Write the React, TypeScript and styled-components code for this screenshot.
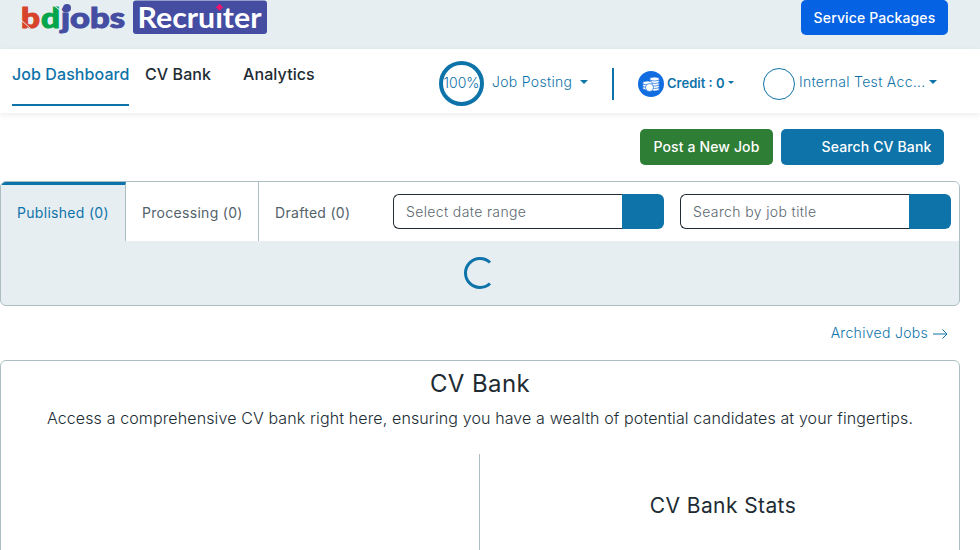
import React from "react";
import styled, { createGlobalStyle } from "styled-components";

const blue = "#0e73a9";
const line = "#adbec3";

const GlobalStyle = createGlobalStyle`
  *, *::before, *::after { box-sizing: border-box; }
  html, body { margin: 0; height: 550px; overflow: hidden; background: #fff; }
  body { font-family: Inter, sans-serif; font-size: 14px; line-height: 21px; letter-spacing: 0.3px; color: #212b33; }
  button, input { font: inherit; letter-spacing: inherit; }
  h2, h3, p { margin: 0; }
`;

const Page = styled.div`
  height: 550px;
  overflow: hidden;
`;

const TopBar = styled.header`
  display: flex;
  justify-content: space-between;
  height: 49px;
  padding: 0 32px 0 21px;
  background: #e7eef2;
`;

const Logo = styled.svg`
  display: block;
  width: 248px;
  height: 36px;
`;

const Button = styled.button<{ $bg: string; $w: number; $h?: number; $left?: boolean }>`
  flex: none;
  width: ${(p) => p.$w}px;
  height: ${(p) => p.$h ?? 36}px;
  padding: ${(p) => (p.$left ? "0 0 1px 28px" : "0 0 1px")};
  border: 0;
  border-radius: 5px;
  background: ${(p) => p.$bg};
  color: #fff;
  font-size: 14px;
  font-weight: 500;
  letter-spacing: 0.13px;
  white-space: nowrap;
`;

const Nav = styled.nav`
  position: relative;
  display: flex;
  height: 64px;
  padding-left: 12px;
  background: #fff;
  box-shadow: 0 2px 6px rgba(0, 0, 0, 0.08);
  white-space: nowrap;
`;

const NavLinks = styled.div`
  display: flex;
  width: 427px;
`;

const NavLink = styled.a<{ $active?: boolean; $ml?: number }>`
  height: 57px;
  margin-left: ${(p) => p.$ml ?? 0}px;
  width: ${(p) => (p.$active ? "117px" : "auto")};
  padding-top: 13px;
  font-size: 16px;
  line-height: 24px;
  font-weight: 500;
  letter-spacing: 0.08px;
  color: ${(p) => (p.$active ? blue : "#212b33")};
  border-bottom: 2px solid ${(p) => (p.$active ? blue : "transparent")};
`;

const Account = styled.div`
  display: flex;
  align-items: flex-start;
  padding-top: 12px;
  color: ${blue};
`;

const Progress = styled.div`
  display: flex;
  align-items: center;
  justify-content: center;
  width: 45px;
  height: 45px;
  border: 4px solid ${blue};
  border-radius: 50%;
  font-weight: 300;
  letter-spacing: 0;
  padding-bottom: 3px;
`;

const MenuText = styled.span<{ $w: number; $ml: number }>`
  width: ${(p) => p.$w}px;
  margin: 10px 0 0 ${(p) => p.$ml}px;
  font-weight: 300;
`;

const Caret = styled.i<{ $size: number; $top: number }>`
  margin-top: ${(p) => p.$top}px;
  border: ${(p) => p.$size}px solid transparent;
  border-top-color: ${blue};
  border-bottom: 0;
`;

const Divider = styled.span`
  width: 2px;
  height: 32px;
  margin: 7px 24px 0 24px;
  background: ${blue};
`;

const Coins = styled.svg`
  width: 26px;
  height: 26px;
  margin-top: 10px;
`;

const Credit = styled.b`
  width: 61px;
  margin: 12px 0 0 3px;
  font-size: 13px;
  font-weight: 600;
  letter-spacing: 0;
`;

const Avatar = styled.span`
  width: 32px;
  height: 32px;
  margin: 7px 0 0 29px;
  border: 1px solid ${blue};
  border-radius: 50%;
`;

const Content = styled.main`
  width: 960px;
`;

const Actions = styled.div`
  display: flex;
  justify-content: flex-end;
  gap: 8px;
  padding: 16px 16px 16px 0;
`;

const Panel = styled.section`
  border: 1px solid ${line};
  border-radius: 6px;
  overflow: hidden;
`;

const JobsPanel = styled(Panel)`
  height: 125px;
  background: #e7eef2;
`;

const TabBar = styled.div`
  display: flex;
  height: 59px;
  background: #fff;
`;

const Tab = styled.div<{ $active?: boolean; $w: number; $last?: boolean }>`
  flex: none;
  width: ${(p) => p.$w}px;
  padding: ${(p) => (p.$active ? 17 : 20)}px 0 0 16px;
  border-top: ${(p) => (p.$active ? `3px solid ${blue}` : "0")};
  border-right: ${(p) => (p.$last ? "0" : `1px solid ${line}`)};
  background: ${(p) => (p.$active ? "#e7eef2" : "#fff")};
  color: ${(p) => (p.$active ? blue : "#53626a")};
  font-weight: 400;
  white-space: nowrap;
`;

const Search = styled.div`
  display: flex;
  flex: none;
  width: 271px;
  height: 35px;
  margin: 12px 16px 0 0;
`;

const Field = styled.input`
  width: 229px;
  height: 35px;
  padding: 0 12px;
  border: 1px solid #212b33;
  border-right: 0;
  border-radius: 6px 0 0 6px;
  outline: 0;
  font-weight: 300;
  letter-spacing: 0.37px;
  &::placeholder { color: #5b686f; opacity: 1; }
`;

const SearchButton = styled.button`
  width: 42px;
  border: 0;
  border-radius: 0 6px 6px 0;
  background: ${blue};
`;

const Spinner = styled.svg`
  display: block;
  width: 32px;
  height: 32px;
  margin: 16px auto 0 462px;
`;

const Archived = styled.a`
  display: flex;
  align-items: center;
  justify-content: flex-end;
  height: 54px;
  padding: 0 12px 1px 0;
  color: ${blue};
  font-weight: 300;
  svg { margin: 1px 0 0 5px; }
`;

const BankPanel = styled(Panel)`
  height: 230px;
  text-align: center;
`;

const Title = styled.h2`
  padding-top: 8px;
  font-size: 24px;
  line-height: 29px;
  font-weight: 400;
  letter-spacing: 0.4px;
`;

const Intro = styled.p`
  margin-top: 8px;
  font-size: 16px;
  line-height: 24px;
  font-weight: 300;
  letter-spacing: 0.125px;
  white-space: nowrap;
`;

const Stats = styled.div`
  display: grid;
  grid-template-columns: 479px 1fr;
  height: 180px;
  margin-top: 24px;
`;

const StatsColumn = styled.div`
  border-right: 1px solid ${line};
`;

const StatsTitle = styled.h3`
  padding: 38px 0 0 7px;
  font-size: 21px;
  line-height: 28px;
  font-weight: 400;
  letter-spacing: 0.4px;
`;

const BrandLogo = () => (
  <Logo viewBox="0 0 248 36" aria-label="bdjobs Recruiter">
    <g fontFamily="Lato, sans-serif" fontWeight="900" fontSize="28" letterSpacing="0" strokeWidth="1">
      <text x="0" y="27.7" fill="#d8432b" stroke="#d8432b" textLength="19" lengthAdjust="spacingAndGlyphs">b</text>
      <text x="20" y="27.7" fill="#05a64b" stroke="#05a64b" textLength="19" lengthAdjust="spacingAndGlyphs">d</text>
      <text x="40" y="27.7" fill="#444da1" stroke="#444da1" textLength="64" lengthAdjust="spacingAndGlyphs">jobs</text>
    </g>
    <circle cx="46" cy="8" r="4" fill="#444da1" />
    <path d="m0 20 9 8M32 5l8 6" stroke="#e7eef2" strokeWidth="1" />
    <rect x="112" y="0.5" width="134" height="33.5" rx="3" fill="#444da1" />
    <text x="116.5" y="27.7" fill="#fff" fontFamily="Lato, sans-serif" fontWeight="700" fontSize="28" letterSpacing="0" textLength="124" lengthAdjust="spacingAndGlyphs">Recruıter</text>
    <path d="m198.5 4 1.3 2 2 1.3-2 1.3-1.3 2-1.3-2-2-1.3 2-1.3z" fill="#ef146f" stroke="#ef146f" />
  </Logo>
);

const CoinIcon = () => (
  <Coins viewBox="0 0 26 26">
    <circle cx="13" cy="13" r="13" fill="#116de0" />
    <g fill="#fff" stroke="#116de0" strokeWidth=".7">
      {[18, 15.5, 13, 10.5, 8].map((y) => <ellipse key={y} cx="16.5" cy={y} rx="4.8" ry="2" />)}
      {[17, 14.5, 12].map((y) => <ellipse key={y} cx="9.5" cy={y} rx="4.8" ry="2" />)}
      <circle cx="11.5" cy="16.5" r="4" />
    </g>
  </Coins>
);

export default function App() {
  return (
    <Page>
      <GlobalStyle />
      <TopBar>
        <BrandLogo />
        <Button $bg="#0562e2" $w={147} $h={35}>Service Packages</Button>
      </TopBar>
      <Nav>
        <NavLinks>
          <NavLink $active>Job Dashboard</NavLink>
          <NavLink $ml={16}>CV Bank</NavLink>
          <NavLink $ml={32}>Analytics</NavLink>
        </NavLinks>
        <Account>
          <Progress>100%</Progress>
          <MenuText $w={88} $ml={8}>Job Posting</MenuText>
          <Caret $size={4} $top={19} />
          <Divider />
          <CoinIcon />
          <Credit>Credit : 0</Credit>
          <Caret $size={3} $top={20} />
          <Avatar />
          <MenuText $w={130} $ml={4}>Internal Test Acc...</MenuText>
          <Caret $size={4} $top={19} />
        </Account>
      </Nav>
      <Content>
        <Actions>
          <Button $bg="#2f7e35" $w={133}>Post a New Job</Button>
          <Button $bg={blue} $w={163} $left>Search CV Bank</Button>
        </Actions>
        <JobsPanel>
          <TabBar>
            <Tab $active $w={125}>Published (0)</Tab>
            <Tab $w={133}>Processing (0)</Tab>
            <Tab $w={134} $last>Drafted (0)</Tab>
            <Search><Field placeholder="Select date range" /><SearchButton /></Search>
            <Search><Field placeholder="Search by job title" /><SearchButton /></Search>
          </TabBar>
          <Spinner viewBox="0 0 32 32">
            <path d="M27 5.5A14.5 14.5 0 1 0 27 26.5" fill="none" stroke={blue} strokeWidth="3" />
          </Spinner>
        </JobsPanel>
        <Archived>
          Archived Jobs
          <svg width="15" height="13" viewBox="0 0 15 13" fill="none" stroke={blue}>
            <path d="M0 7h14M9.5 2.5 14 7l-4.5 4.5" />
          </svg>
        </Archived>
        <BankPanel>
          <Title>CV Bank</Title>
          <Intro>Access a comprehensive CV bank right here, ensuring you have a wealth of potential candidates at your fingertips.</Intro>
          <Stats>
            <StatsColumn />
            <StatsTitle>CV Bank Stats</StatsTitle>
          </Stats>
        </BankPanel>
      </Content>
    </Page>
  );
}
